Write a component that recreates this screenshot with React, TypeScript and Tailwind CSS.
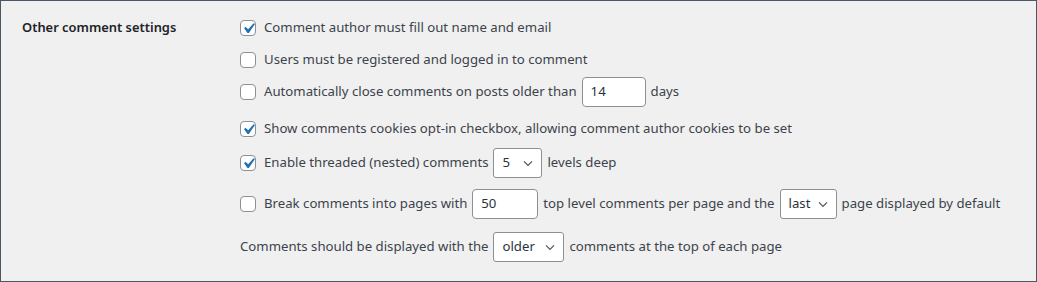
import React from "react";

const font = { fontFamily: '"Segoe UI", "Noto Sans", Roboto, sans-serif' };

function Check({ on }: { on?: boolean }) {
  return (
    <span className="relative mr-2 flex h-4 w-4 shrink-0 items-center justify-center rounded-[4px] border border-[#8c8f94] bg-white">
      {on && (
        <svg width="21" height="21" viewBox="0 0 20 20" className="absolute left-[-3px] top-[-3px]">
          <path d="M14.83 4.89l1.34.94-5.81 8.38H9.02L5.78 9.67l1.34-1.25 2.57 2.4z" fill="#2271b1" />
        </svg>
      )}
    </span>
  );
}

function Input({ value, w }: { value: string; w: string }) {
  return (
    <span className={`mx-[5px] flex h-[30px] shrink-0 items-center rounded-[4px] border border-[#8c8f94] bg-white px-2 text-[#2c3338] ${w}`}>
      {value}
    </span>
  );
}

function Select({ value, w }: { value: string; w: string }) {
  return (
    <span className={`mx-[5px] flex h-[30px] shrink-0 items-center justify-between rounded-[3px] border border-[#8c8f94] bg-white pl-2 pr-[5px] text-[#2c3338] ${w}`}>
      {value}
      <svg width="16" height="16" viewBox="0 0 20 20">
        <path d="M5 8l5 5 5-5" fill="none" stroke="#50575e" strokeWidth="1.6" />
      </svg>
    </span>
  );
}

export default function App() {
  return (
    <div style={font} className="flex h-[282px] w-[1037px] whitespace-nowrap border border-[#4a5866] bg-[#f0f0f1] text-[13.2px] text-[#3c434a]">
      {/* Label */}
      <div className="w-[239px] shrink-0 pl-[21px] pt-[17px] text-[12.9px] font-semibold text-[#1d2327]">
        Other comment settings
      </div>

      {/* Options */}
      <div className="flex flex-col pt-[15px]">
        <div className="flex h-6 items-center">
          <Check on />
          Comment author must fill out name and email
        </div>
        <div className="mt-2 flex h-6 items-center">
          <Check />
          Users must be registered and logged in to comment
        </div>
        <div className="mt-[5px] flex h-[30px] items-center">
          <Check />
          Automatically close comments on posts older than
          <Input value="14" w="w-[64px]" />
          days
        </div>
        <div className="mt-[10px] flex h-6 items-center">
          <Check on />
          Show comments cookies opt-in checkbox, allowing comment author cookies to be set
        </div>
        <div className="mt-[7px] flex h-[30px] items-center">
          <Check on />
          Enable threaded (nested) comments
          <Select value="5" w="w-[49px]" />
          levels deep
        </div>
        <div className="mt-[11px] flex h-[30px] items-center">
          <Check />
          Break comments into pages with
          <Input value="50" w="w-[66px]" />
          top level comments per page and the
          <Select value="last" w="w-[57px]" />
          page displayed by default
        </div>
        <div className="mt-[13px] flex h-[30px] items-center">
          Comments should be displayed with the
          <Select value="older" w="w-[71px]" />
          comments at the top of each page
        </div>
      </div>
    </div>
  );
}
